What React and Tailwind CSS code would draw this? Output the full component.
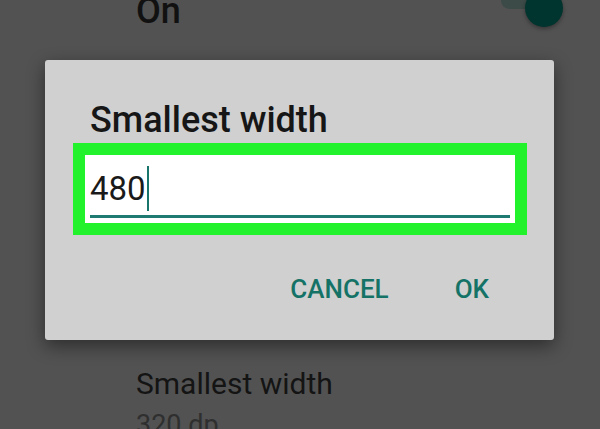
import React from 'react';

const App = () => {
  return (
    <div className="w-[600px] h-[429px] bg-[#525252] overflow-hidden font-['Roboto',sans-serif] flex flex-col">

      {/* TOP SETTING ROW */}
      <div className="h-[60px] shrink-0 flex items-start justify-between">
        <span className="ml-[136px] -mt-[9px] text-[36px] leading-[40px] font-medium text-[#111]">On</span>
        <div className="relative w-[62px] h-[38px] mr-[37px] -mt-[11px]">
          <div className="absolute left-0 top-[3px] w-[46px] h-[17px] rounded-full bg-[#3c4b48]" />
          <div className="absolute right-0 top-0 w-[38px] h-[38px] rounded-full bg-[#00342e] shadow-[0_2px_4px_rgba(0,0,0,0.35)]" />
        </div>
      </div>

      {/* DIALOG */}
      <div className="ml-[45px] w-[509px] h-[280px] shrink-0 rounded-[3px] bg-[#d0d0d0] shadow-[0_6px_18px_rgba(0,0,0,0.45)] flex flex-col">
        <h2 className="ml-[45px] mt-[40px] text-[36px] leading-[40px] font-medium text-[#161616]">
          Smallest width
        </h2>

        <div className="ml-[28px] mt-[3px] w-[454px] h-[92px] border-[12px] border-[#21f22b] bg-white flex flex-col">
          <div className="ml-[5px] mt-[11px] h-[46px] flex items-start">
            <span className="text-[33px] leading-[46px] text-[#1a1a1a]">480</span>
            <span className="w-[2px] h-[45px] bg-[#17756b] ml-[1px]" />
          </div>
          <div className="ml-[5px] mt-[3px] w-[420px] h-[3px] bg-[#1f7a71]" />
        </div>

        <div className="mt-[39px] flex justify-end pr-[65px] gap-[66px]">
          <span className="text-[26px] leading-[30px] font-medium text-[#147366]">CANCEL</span>
          <span className="text-[26px] leading-[30px] font-medium text-[#147366]">OK</span>
        </div>
      </div>

      {/* SETTING BELOW */}
      <div className="ml-[136px] mt-[26px] shrink-0 flex flex-col">
        <span className="text-[30px] leading-[36px] text-[#141414]">Smallest width</span>
        <span className="mt-[7px] text-[27px] leading-[32px] text-[#2f2f2f]">320 dp</span>
      </div>
    </div>
  );
};

export default App;
